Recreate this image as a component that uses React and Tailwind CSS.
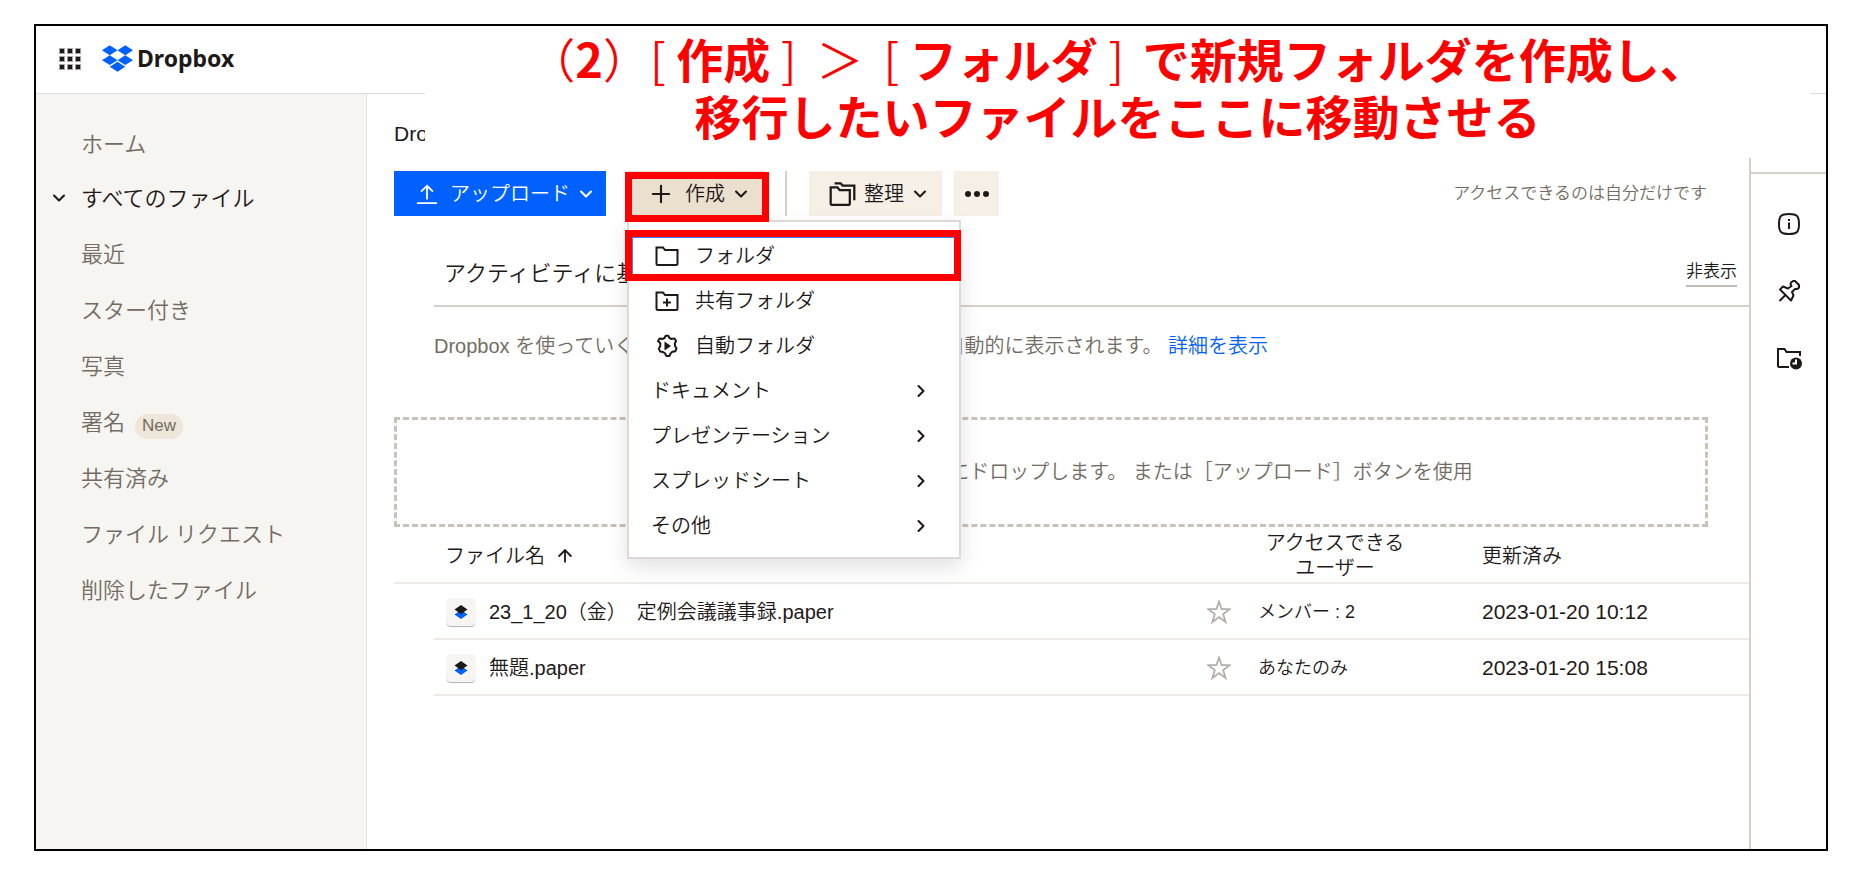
import { ArrowUp, ChevronDown, ChevronRight, Plus } from 'lucide-react';

const NAV = [
  { label: 'すべてのファイル', active: true },
  { label: '最近' },
  { label: 'スター付き' },
  { label: '写真' },
  { label: '署名', badge: 'New' },
  { label: '共有済み' },
  { label: 'ファイル リクエスト' },
  { label: '削除したファイル' },
];

const MENU = [
  { label: 'フォルダ', icon: FolderIcon, highlight: true },
  { label: '共有フォルダ', icon: SharedFolderIcon },
  { label: '自動フォルダ', icon: AutoFolderIcon },
  { label: 'ドキュメント' },
  { label: 'プレゼンテーション' },
  { label: 'スプレッドシート' },
  { label: 'その他' },
];

const FILES = [
  { name: '23_1_20（金）　定例会議議事録.paper', access: 'メンバー : 2', updated: '2023-01-20 10:12' },
  { name: '無題.paper', access: 'あなたのみ', updated: '2023-01-20 15:08' },
];

function Icon({ size = 24, sw = 2, children }) {
  return (
    <svg width={size} height={size} viewBox="0 0 24 24" fill="none" stroke="currentColor" strokeWidth={sw} aria-hidden="true" className="shrink-0">
      {children}
    </svg>
  );
}

function FolderIcon() {
  return (
    <Icon>
      <path d="M1.500 19.500V3.500H8l2 2.500h12.500v13.500q0 1.500-1.500 1.500H3q-1.500 0-1.500-1.500z" />
    </Icon>
  );
}

function SharedFolderIcon() {
  return (
    <Icon>
      <path d="M1.500 19.500V3.500H8l2 2.500h12.500v13.500q0 1.500-1.500 1.500H3q-1.500 0-1.500-1.500z" />
      <path d="M12 9.500v8M8 13.500h8" />
    </Icon>
  );
}

function AutoFolderIcon() {
  return (
    <Icon>
      <path strokeLinejoin="round" d="M9.5 4 10.7 1.800h2.600L14.500 4l2.200 1 2.600-.6 1.800 2.500-1.300 2.400.2 2.700 1.500 2.300-1.200 3-2.900.5-1.900 1.600-1 2.600h-3l-1.500-2.600-2-1.400-2.900-.4-1.300-2.900 1.500-2.600V9.300L3 7l1.700-2.600 2.700.6z" />
      <path d="M9.500 7.500 16 12l-6.500 4.500z" fill="currentColor" stroke="none" />
    </Icon>
  );
}

function DropboxGlyph() {
  return (
    <svg width="31" height="31" viewBox="0 0 24 24" fill="#0061fe" aria-hidden="true">
      <path d="M6 1.8 0 5.630l6 3.820 6-3.820zM18 1.800l-6 3.830 6 3.820 6-3.820zM0 13.270l6 3.830 6-3.830-6-3.820zM18 9.450l-6 3.820 6 3.830 6-3.830zM6 18.370l6 3.820 6-3.820-6-3.820z" />
    </svg>
  );
}

function PaperIcon() {
  return (
    <span className="flex h-7 w-7 shrink-0 items-center justify-center rounded-sm bg-[#f7f5f2] shadow-[0_1px_1px_#b5b0aa]">
      <svg width="14" height="14" viewBox="0 0 14 14" aria-hidden="true">
        <path d="M7 5 13.500 9.500 7 14 .5 9.500z" fill="#0061fe" />
        <path d="M7 0 13.500 4.500 7 9 .5 4.500z" fill="#1e1919" />
      </svg>
    </span>
  );
}

function Header() {
  return (
    <header className="flex h-[68px] items-center border-b border-[#dddcda] pb-0.5 pl-6">
      <button aria-label="アプリ" className="grid grid-cols-3 gap-1">
        {Array.from({ length: 9 }, (_, i) => (
          <span key={i} className="h-1 w-1 bg-[#1e1919] outline outline-[#1e1919]/40" />
        ))}
      </button>
      <a href="#" className="ml-[22px] flex items-center gap-1 font-['Noto_Sans'] text-[23px] font-bold text-[#1e1919]">
        <DropboxGlyph />
        Dropbox
      </a>
    </header>
  );
}

function Sidebar() {
  return (
    <nav className="w-[331px] shrink-0 border-r border-[#e6e3de] bg-[#f7f5f2] pt-6 text-[22px] font-[350]">
      <a href="#" className="flex h-[52px] items-center pl-[45px] text-[#736c64]">ホーム</a>
      {NAV.map(({ label, active, badge }) => (
        <a key={label} href="#" className={`flex h-14 items-center ${active ? 'text-[#1e1919]' : 'text-[#736c64]'}`}>
          <span className="flex w-[45px] justify-center">
            {active && <ChevronDown size={20} strokeWidth={2.5} />}
          </span>
          {label}
          {badge && (
            <span className="mt-2 ml-2.5 flex h-[25px] items-center rounded-full bg-[#eee6d9] px-[7px] text-[17px]">{badge}</span>
          )}
        </a>
      ))}
    </nav>
  );
}

function CreateMenu() {
  return (
    <div role="menu" className="absolute top-[49px] left-0 z-10 w-[334px] border-2 border-[#dddad5] bg-white pt-[11px] pb-[9px] shadow-[0_8px_20px_rgba(0,0,0,0.12)]">
      {MENU.map(({ label, icon: ItemIcon, highlight }) => (
        <button key={label} role="menuitem" className="relative flex h-[45px] w-full items-center pr-7 pl-[22px]">
          {ItemIcon && (
            <span className="mr-4 ml-1 flex">
              <ItemIcon />
            </span>
          )}
          {label}
          {!ItemIcon && <ChevronRight size={20} strokeWidth={2.5} className="ml-auto" />}
          {highlight && (
            <span className="absolute -inset-y-[3px] -right-0.5 -left-1 border-7 border-[#f00]">
              <span className="block h-full border-t border-l border-[#3b84fe]" />
            </span>
          )}
        </button>
      ))}
    </div>
  );
}

function Toolbar() {
  return (
    <div className="flex h-[45px] items-stretch text-xl">
      <button className="flex items-center bg-[#0061fe] pr-2.5 pl-[22px] text-white">
        <Icon size={22}>
          <path d="M12 18V3M5.500 9.500 12 3l6.500 6.500M1 22h22" />
        </Icon>
        <span className="ml-3">アップロード</span>
        <ChevronDown size={20} strokeWidth={2.5} className="ml-1.5" />
      </button>
      <div className="relative ml-[21px]">
        <button className="flex h-full w-[138px] items-center bg-[#ebdfcd] pl-5">
          <Plus size={28} strokeWidth={1.8} />
          <span className="ml-2.5">作成</span>
          <ChevronDown size={20} strokeWidth={2.5} className="ml-1.5" />
        </button>
        <span className="absolute top-px -right-1 -bottom-1.5 -left-0.5 z-20 border-7 border-[#f00]" />
        <CreateMenu />
      </div>
      <span className="ml-5 w-0.5 bg-[#d5d0ca]" />
      <button className="ml-[22px] flex items-center bg-[#f5efe6] pr-3 pl-5">
        <Icon size={27}>
          <path d="M1.500 20.500V6.500h6l2 2.500H18.500v12q0 1-1 1H2.500q-1 0-1-1z" />
          <path d="M5 3h5.500l1.500 2h10.500v13" />
        </Icon>
        <span className="ml-2">整理</span>
        <ChevronDown size={20} strokeWidth={2.5} className="ml-1.5" />
      </button>
      <button aria-label="その他の操作" className="ml-3 flex w-[45px] items-center justify-center gap-[3px] bg-[#f5efe6]">
        <span className="h-1.5 w-1.5 rounded-full bg-[#1e1919]" />
        <span className="h-1.5 w-1.5 rounded-full bg-[#1e1919]" />
        <span className="h-1.5 w-1.5 rounded-full bg-[#1e1919]" />
      </button>
      <span className="mr-[42px] ml-auto self-center text-[17px] text-[#736c64]">アクセスできるのは自分だけです</span>
    </div>
  );
}

function Suggestions() {
  return (
    <section className="ml-10">
      <div className="mt-[25px] flex h-[66px] items-center justify-between border-b-2 border-[#d5d1ca] pr-3 pl-2.5">
        <h2 className="text-[22px]">アクティビティに基づくおすすめ</h2>
        <button className="border-b-2 border-[#c4bcb4] text-[17px]">非表示</button>
      </div>
      <p className="mt-[25px] text-xl leading-7 text-[#736c64]">
        Dropbox を使っていくと、 おすすめコンテンツがここに 自動的に表示されます。{' '}
        <a href="#" className="text-[#0061fe]">詳細を表示</a>
      </p>
    </section>
  );
}

function FileTable() {
  return (
    <table className="w-full table-fixed border-collapse text-left text-xl">
      <colgroup>
        <col className="w-10" />
        <col />
        <col className="w-[58px]" />
        <col className="w-[224px]" />
        <col className="w-[267px]" />
      </colgroup>
      <thead>
        <tr className="h-14 border-b-2 border-[#eeebe6]">
          <th />
          <th className="pt-0.5 pl-[11px] font-[350]">
            <span className="flex items-center gap-2.5">
              ファイル名
              <ArrowUp size={20} strokeWidth={2.2} />
            </span>
          </th>
          <th />
          <th className="pt-0.5 pr-[70px] text-center leading-[25px] font-[350]">アクセスできるユーザー</th>
          <th className="pt-0.5 font-[350]">更新済み</th>
        </tr>
      </thead>
      <tbody>
        {FILES.map((f) => (
          <tr key={f.name} className="h-14">
            <td />
            <td className="border-b-2 border-[#eeebe6] pt-0.5 pl-[13px]">
              <span className="flex items-center gap-3.5">
                <PaperIcon />
                {f.name}
              </span>
            </td>
            <td className="border-b-2 border-[#eeebe6] pt-0.5">
              <button aria-label="スターを付ける" className="flex pl-[7px] text-[#b5b0aa]">
                <Icon size={24} sw={1.8}>
                  <path d="m12 1.500 2.600 7.700h8l-6.400 4.800 2.400 8L12 17.200 5.400 22l2.400-8-6.400-4.800h8z" />
                </Icon>
              </button>
            </td>
            <td className="border-b-2 border-[#eeebe6] pt-0.5 text-lg">{f.access}</td>
            <td className="border-b-2 border-[#eeebe6] pt-0.5 text-[21px]">{f.updated}</td>
          </tr>
        ))}
      </tbody>
    </table>
  );
}

function Rail() {
  return (
    <aside className="w-[77px] shrink-0 border-l-2 border-[#d5d0ca]">
      <div className="h-20 border-b-2 border-[#d5d0ca]" />
      <div className="flex flex-col items-center gap-[43px] pt-[38px]">
        <button aria-label="情報">
          <Icon>
            <path d="M12 2q6 0 8 2t2 8-2 8-8 2-8-2-2-8 2-8 8-2z" />
            <path d="M12 10.500v6.500M12 7v2" />
          </Icon>
        </button>
        <button aria-label="固定">
          <Icon>
            <path strokeLinejoin="round" d="M13.500 5 14 3.500 16 2h2l4 4v2.500L20.500 10H18l-3 3 1.500 3.500L14 21.500l-11-11 3-3 5 2 3.500-2.500z" />
            <path d="m8.500 16-6 6" />
          </Icon>
        </button>
        <button aria-label="バージョン履歴">
          <svg width="26" height="24" viewBox="0 0 26 24" fill="none" stroke="currentColor" strokeWidth="2" aria-hidden="true">
            <path d="M13 21H3q-1 0-1-1V3h6.500l2 3H24v4" />
            <circle cx="20" cy="17.500" r="6" fill="currentColor" stroke="none" />
            <path d="M20 13.500v4h-3.500" stroke="#fff" />
          </svg>
        </button>
      </div>
    </aside>
  );
}

// instruction text laid over the top of the window
function Caption() {
  return (
    <div className="absolute top-0 right-4 left-[389px] z-30 h-[132px] bg-white pt-[3px] text-center font-['Noto_Sans_CJK_JP',sans-serif] text-[47px] leading-[57px] font-bold text-[#f00]">
      <p>
        <span className="font-[350]">（</span>2<span className="font-[350]">）[</span> 作成 <span className="font-[350]">]</span>
        <span className="mx-5 font-[350]">＞</span>
        <span className="font-[350]">[</span> フォルダ <span className="mr-2 font-[350]">]</span> で新規フォルダを作成し、
      </p>
      <p>移行したいファイルをここに移動させる</p>
    </div>
  );
}

export default function App() {
  return (
    <div lang="ja" className="flex min-h-screen bg-white py-6 pr-[30px] pl-[34px] font-['Liberation_Sans','Noto_Sans_CJK_JP',sans-serif] font-[350] text-[#1e1919]">
      <div className="relative flex flex-1 flex-col border-2 border-black">
        <Header />
        <Caption />
        <div className="flex flex-1">
          <Sidebar />
          <main className="min-w-0 flex-1 pt-[25px] pl-[27px]">
            <h1 className="mb-[22px] h-[30px] text-[21px] leading-[30px]">Dropbox</h1>
            <Toolbar />
            <Suggestions />
            <div className="mt-[57px] mr-[41px] flex h-[110px] items-center justify-center border-3 border-dashed border-[#c8c2b8] text-xl text-[#736c64]">
              アップロードしたいファイルをここにドロップします。 または［アップロード］ボタンを使用
            </div>
            <FileTable />
          </main>
          <Rail />
        </div>
      </div>
    </div>
  );
}
